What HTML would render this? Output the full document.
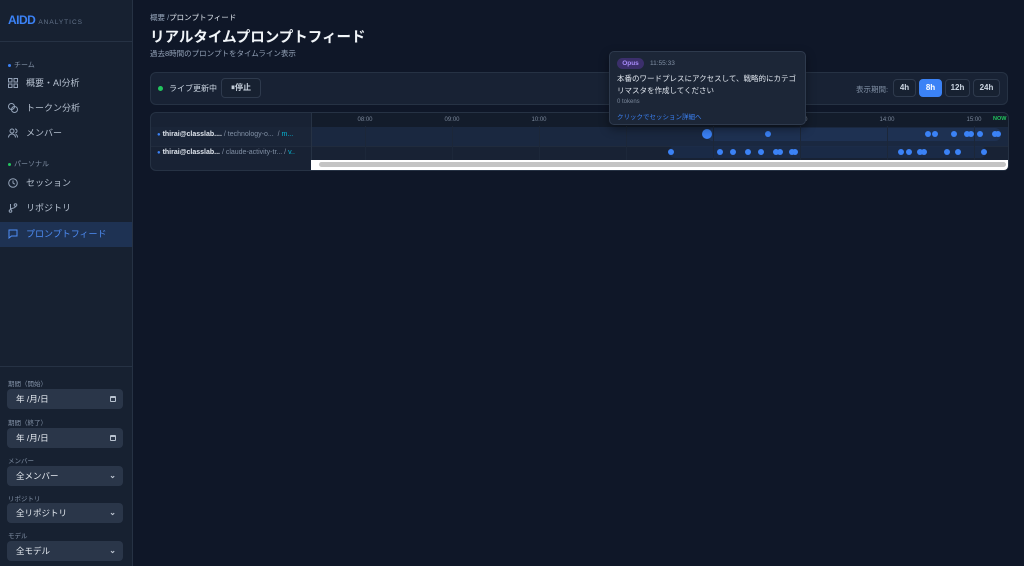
<!DOCTYPE html>
<html><head><meta charset="utf-8"><style>
*{box-sizing:border-box;margin:0;padding:0}
body{width:1024px;height:566px;background:#0f1728;font-family:"Liberation Sans","Noto Sans CJK JP",sans-serif;color:#e2e8f0;position:relative;overflow:hidden}
.sb{position:absolute;left:0;top:0;width:133px;height:566px;background:#172131;border-right:1px solid #263244}
.logo{position:absolute;left:8px;top:13px;font-weight:bold;font-size:12px;color:#3b82f6;letter-spacing:-.5px}
.logo span{font-size:6.5px;color:#64748b;letter-spacing:1px;font-weight:normal;margin-left:3px}
.hr{position:absolute;left:0;width:132px;border-top:1px solid #263244}
.sec{position:absolute;left:8px;font-size:7px;color:#8190a5}
.sec i{display:inline-block;width:3px;height:3px;border-radius:50%;margin-right:3px;vertical-align:middle}
.it{position:absolute;left:0;width:132px;height:25px;font-size:9px;color:#b5c0cf;padding-left:26px;line-height:25px}
.it svg{position:absolute;left:8px;top:7px}
.it.act{background:#1e3253;color:#4f8ef7}
.fl{position:absolute;left:8px;font-size:6.5px;color:#8190a5}
.in{position:absolute;left:7px;width:116px;height:20px;background:#2a3649;border-radius:4px;font-size:8.5px;color:#e8edf3;padding-left:9px;line-height:20px}
.in b{position:absolute;right:7px;top:0;font-weight:bold;font-size:8px;color:#c0c8d4}
.cal{position:absolute;right:7px;top:7px;width:6px;height:6px;border:1px solid #b8c2cf;border-top-width:2px;border-radius:1px}
.btn{position:absolute;height:20px;border:1px solid #2e3a4d;border-radius:4px;font-size:8px;font-weight:bold;color:#cbd5e1;text-align:center;line-height:18px;background:#172131}
.dot{position:absolute;width:6px;height:6px;border-radius:50%;background:#3b82f6;margin-left:-3px;margin-top:-3px}
.tk{position:absolute;top:117px;font-size:6px;color:#7a879a;transform:translateX(-50%)}
.vl{position:absolute;top:126px;height:34px;border-left:1px solid #1c2739}
.card{position:absolute;background:#182234;border:1px solid #263244;border-radius:6px}
</style></head><body>
<div class="sb">
<div class="logo">AIDD<span>ANALYTICS</span></div>
<div class="hr" style="top:41px"></div>
<div class="sec" style="top:60px"><i style="background:#3b82f6"></i>チーム</div>
<div class="it" style="top:71px"><svg width="10" height="10" viewBox="0 0 10 10" fill="none" stroke="#94a3b8" stroke-width="1"><rect x="0.5" y="0.5" width="3.5" height="3.5"/><rect x="6" y="0.5" width="3.5" height="3.5"/><rect x="0.5" y="6" width="3.5" height="3.5"/><rect x="6" y="6" width="3.5" height="3.5"/></svg>概要・AI分析</div>
<div class="it" style="top:96px"><svg width="10" height="10" viewBox="0 0 10 10" fill="none" stroke="#94a3b8" stroke-width="1"><circle cx="3.5" cy="3.5" r="3"/><circle cx="6.5" cy="6.5" r="3"/></svg>トークン分析</div>
<div class="it" style="top:121px"><svg width="10" height="10" viewBox="0 0 10 10" fill="none" stroke="#94a3b8" stroke-width="1"><circle cx="4" cy="3" r="2"/><path d="M0.5 9.5c0-2 1.5-3.5 3.5-3.5s3.5 1.5 3.5 3.5M7 1a2 2 0 010 4M9.5 9.5c0-1.5-.7-2.7-1.8-3.2"/></svg>メンバー</div>
<div class="sec" style="top:159px"><i style="background:#22c55e"></i>パーソナル</div>
<div class="it" style="top:171px"><svg width="10" height="10" viewBox="0 0 10 10" fill="none" stroke="#94a3b8" stroke-width="1"><circle cx="5" cy="5" r="4.3"/><path d="M5 2.5V5l1.8 1.2"/></svg>セッション</div>
<div class="it" style="top:196px"><svg width="10" height="10" viewBox="0 0 10 10" fill="none" stroke="#94a3b8" stroke-width="1"><circle cx="2.5" cy="8" r="1.3"/><circle cx="7.5" cy="2" r="1.3"/><path d="M2.5 1v5.7M7.5 3.3c0 2.5-5 1.5-5 3.4"/></svg>リポジトリ</div>
<div class="it act" style="top:222px"><svg width="10" height="10" viewBox="0 0 10 10" fill="none" stroke="#4f8ef7" stroke-width="1"><path d="M1 1h8v6H3.5L1 9z"/></svg>プロンプトフィード</div>
<div class="hr" style="top:366px"></div>
<div class="fl" style="top:378px">期間（開始）</div>
<div class="in" style="top:389px">年 /月/日<span class="cal"></span></div>
<div class="fl" style="top:417px">期間（終了）</div>
<div class="in" style="top:428px">年 /月/日<span class="cal"></span></div>
<div class="fl" style="top:455px">メンバー</div>
<div class="in" style="top:466px">全メンバー<b>⌄</b></div>
<div class="fl" style="top:493px">リポジトリ</div>
<div class="in" style="top:503px">全リポジトリ<b>⌄</b></div>
<div class="fl" style="top:530px">モデル</div>
<div class="in" style="top:541px">全モデル<b>⌄</b></div>
</div>

<div style="position:absolute;left:150px;top:12px;font-size:7.5px;color:#94a3b8">概要 /<span style="color:#e2e8f0">プロンプトフィード</span></div>
<div style="position:absolute;left:150px;top:26px;font-size:14.5px;font-weight:bold;color:#f1f5f9">リアルタイムプロンプトフィード</div>
<div style="position:absolute;left:150px;top:48px;font-size:7.5px;color:#94a3b8">過去8時間のプロンプトをタイムライン表示</div>

<div class="card" style="left:150px;top:72px;width:858px;height:33px"></div>
<div style="position:absolute;left:158px;top:86px;width:5px;height:5px;border-radius:50%;background:#22c55e"></div>
<div style="position:absolute;left:169px;top:83px;font-size:8px;color:#cbd5e1">ライブ更新中</div>
<div class="btn" style="left:221px;top:78px;width:40px">⏸停止</div>
<div style="position:absolute;left:856px;top:84px;font-size:7.5px;color:#8190a5">表示期間:</div>
<div class="btn" style="left:893px;top:79px;width:23px;height:18px;line-height:16px">4h</div>
<div class="btn" style="left:919px;top:79px;width:23px;height:18px;line-height:16px;background:#3b82f6;border-color:#3b82f6;color:#fff">8h</div>
<div class="btn" style="left:945px;top:79px;width:25px;height:18px;line-height:16px">12h</div>
<div class="btn" style="left:973px;top:79px;width:27px;height:18px;line-height:16px">24h</div>

<div class="card" style="left:150px;top:112px;width:859px;height:59px;overflow:hidden">
<div style="position:absolute;left:160px;top:0;width:700px;height:14px;background:#131c2b"></div>
<div style="position:absolute;left:0;top:14px;width:860px;height:1px;background:#263244"></div>
<div style="position:absolute;left:160px;top:14px;width:700px;height:19px;background:#1a2840"></div>
<div style="position:absolute;left:0;top:14px;width:160px;height:19px;background:#1a2538"></div>
<div style="position:absolute;left:0;top:33px;width:860px;height:1px;background:#202b3d"></div>
<div style="position:absolute;left:160px;top:0;height:60px;border-left:1px solid #263244"></div>
</div>
<div style="position:absolute;left:707px;top:128px;width:294px;height:13px;background:#1f3356;border-radius:6px;opacity:.8"></div>
<div style="position:absolute;left:669px;top:146px;width:317px;height:12px;background:#1c2d4b;border-radius:6px;opacity:.8"></div>
<div class="vl" style="left:365px"></div><div class="vl" style="left:452px"></div><div class="vl" style="left:539px"></div><div class="vl" style="left:626px"></div><div class="vl" style="left:713px"></div><div class="vl" style="left:800px"></div><div class="vl" style="left:887px"></div><div class="vl" style="left:974px"></div>
<div class="tk" style="left:365px">08:00</div><div class="tk" style="left:452px">09:00</div><div class="tk" style="left:539px">10:00</div><div class="tk" style="left:800px">13:00</div><div class="tk" style="left:887px">14:00</div><div class="tk" style="left:974px">15:00</div>
<div style="position:absolute;left:993px;top:116px;font-size:5.5px;font-weight:bold;color:#22c55e">NOW</div>

<div style="position:absolute;left:157px;top:131px;font-size:7px;white-space:nowrap"><span style="color:#3b82f6;font-size:6px">●</span> <b style="color:#e2e8f0">thirai@classlab....</b> <span style="color:#8190a5">/ technology-o... &nbsp;/</span> <span style="color:#06b6d4">m...</span></div>
<div style="position:absolute;left:157px;top:149px;font-size:7px;white-space:nowrap"><span style="color:#3b82f6;font-size:6px">●</span> <b style="color:#e2e8f0">thirai@classlab...</b> <span style="color:#8190a5">/ claude-activity-tr... /</span> <span style="color:#06b6d4">v..</span></div>

<div style="position:absolute;left:311px;top:160px;width:697px;height:10px;background:#fff;border-radius:0 0 4px 0"></div>
<div style="position:absolute;left:319px;top:162px;width:687px;height:5px;background:#c4c4c4;border-radius:3px"></div>

<div class="dot" style="left:707px;top:134px;width:10px;height:10px;margin:-5px"></div>
<div class="dot" style="left:768px;top:134px"></div><div class="dot" style="left:928px;top:134px"></div><div class="dot" style="left:935px;top:134px"></div><div class="dot" style="left:954px;top:134px"></div><div class="dot" style="left:967px;top:134px"></div><div class="dot" style="left:971px;top:134px"></div><div class="dot" style="left:980px;top:134px"></div><div class="dot" style="left:995px;top:134px"></div><div class="dot" style="left:998px;top:134px"></div>
<div class="dot" style="left:671px;top:152px"></div><div class="dot" style="left:720px;top:152px"></div><div class="dot" style="left:733px;top:152px"></div><div class="dot" style="left:748px;top:152px"></div><div class="dot" style="left:761px;top:152px"></div><div class="dot" style="left:776px;top:152px"></div><div class="dot" style="left:780px;top:152px"></div><div class="dot" style="left:792px;top:152px"></div><div class="dot" style="left:795px;top:152px"></div><div class="dot" style="left:901px;top:152px"></div><div class="dot" style="left:909px;top:152px"></div><div class="dot" style="left:920px;top:152px"></div><div class="dot" style="left:924px;top:152px"></div><div class="dot" style="left:947px;top:152px"></div><div class="dot" style="left:958px;top:152px"></div><div class="dot" style="left:984px;top:152px"></div>

<div style="position:absolute;left:609px;top:51px;width:197px;height:74px;background:#1c2637;border:1px solid #2e3a4d;border-radius:5px;box-shadow:0 4px 10px rgba(0,0,0,.4)">
<div style="position:absolute;left:7px;top:6px;width:27px;height:11px;background:#3b2f6b;border-radius:6px;font-size:6.5px;font-weight:bold;color:#a78bfa;text-align:center;line-height:11px">Opus</div>
<div style="position:absolute;left:40px;top:8px;font-size:6.5px;color:#8190a5">11:55:33</div>
<div style="position:absolute;left:7px;top:21px;width:185px;font-size:7.5px;line-height:12px;color:#e2e8f0">本番のワードプレスにアクセスして、戦略的にカテゴリマスタを作成してください</div>
<div style="position:absolute;left:7px;top:47px;font-size:6px;color:#7a879a">0 tokens</div>
<div style="position:absolute;left:7px;top:59px;font-size:6.5px;color:#3b82f6">クリックでセッション詳細へ</div>
</div>
</body></html>
